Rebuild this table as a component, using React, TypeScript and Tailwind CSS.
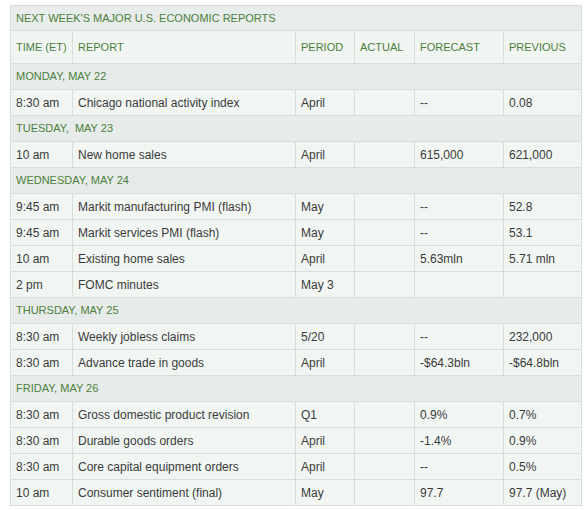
import React from 'react';

type Row = [string, string, string, string, string, string];

interface Day {
  label: string;
  rows: Row[];
}

const days: Day[] = [
  {
    label: 'MONDAY, MAY 22',
    rows: [['8:30 am', 'Chicago national activity index', 'April', '', '--', '0.08']],
  },
  {
    label: 'TUESDAY,  MAY 23',
    rows: [['10 am', 'New home sales', 'April', '', '615,000', '621,000']],
  },
  {
    label: 'WEDNESDAY, MAY 24',
    rows: [
      ['9:45 am', 'Markit manufacturing PMI (flash)', 'May', '', '--', '52.8'],
      ['9:45 am', 'Markit services PMI (flash)', 'May', '', '--', '53.1'],
      ['10 am', 'Existing home sales', 'April', '', '5.63mln', '5.71 mln'],
      ['2 pm', 'FOMC minutes', 'May 3', '', '', ''],
    ],
  },
  {
    label: 'THURSDAY, MAY 25',
    rows: [
      ['8:30 am', 'Weekly jobless claims', '5/20', '', '--', '232,000'],
      ['8:30 am', 'Advance trade in goods', 'April', '', '-$64.3bln', '-$64.8bln'],
    ],
  },
  {
    label: 'FRIDAY, MAY 26',
    rows: [
      ['8:30 am', 'Gross domestic product revision', 'Q1', '', '0.9%', '0.7%'],
      ['8:30 am', 'Durable goods orders', 'April', '', '-1.4%', '0.9%'],
      ['8:30 am', 'Core capital equipment orders', 'April', '', '--', '0.5%'],
      ['10 am', 'Consumer sentiment (final)', 'May', '', '97.7', '97.7 (May)'],
    ],
  },
];

const headers = ['TIME (ET)', 'REPORT', 'PERIOD', 'ACTUAL', 'FORECAST', 'PREVIOUS'];

const App: React.FC = () => {
  return (
    <div className="min-h-screen bg-white pl-[10px] pt-[5px]" style={{ fontFamily: '"Liberation Sans", Arial, sans-serif' }}>
      <table className="w-[571px] table-fixed border-collapse text-[12px]">
        <colgroup>
          <col className="w-[62px]" />
          <col className="w-[223px]" />
          <col className="w-[59px]" />
          <col className="w-[60px]" />
          <col className="w-[89px]" />
          <col className="w-[78px]" />
        </colgroup>
        <tbody>
          {/* Title */}
          <tr className="h-[25px] bg-[#e8ecea]">
            <td colSpan={6} className="border border-[#d7ddd9] px-[5px] text-[11px] text-[#4b7f3b]">
              NEXT WEEK'S MAJOR U.S. ECONOMIC REPORTS
            </td>
          </tr>
          {/* Column headers */}
          <tr className="h-[33px] bg-[#f1f5f2]">
            {headers.map((h) => (
              <td key={h} className="border border-[#d7ddd9] px-[5px] text-[11px] text-[#4b7f3b] whitespace-nowrap">
                {h}
              </td>
            ))}
          </tr>
          {days.map((day) => (
            <React.Fragment key={day.label}>
              <tr className="h-[26px] bg-[#e7ebe9]">
                <td colSpan={6} className="border border-[#d7ddd9] px-[5px] text-[11px] text-[#4b7f3b] whitespace-pre">
                  {day.label}
                </td>
              </tr>
              {day.rows.map((r, i) => (
                <tr key={i} className="h-[26px] bg-[#f1f6f3]">
                  {r.map((c, j) => (
                    <td key={j} className="border border-[#d7ddd9] px-[5px] text-[#3a3a3a] whitespace-nowrap">
                      {c}
                    </td>
                  ))}
                </tr>
              ))}
            </React.Fragment>
          ))}
        </tbody>
      </table>
    </div>
  );
};

export default App;
